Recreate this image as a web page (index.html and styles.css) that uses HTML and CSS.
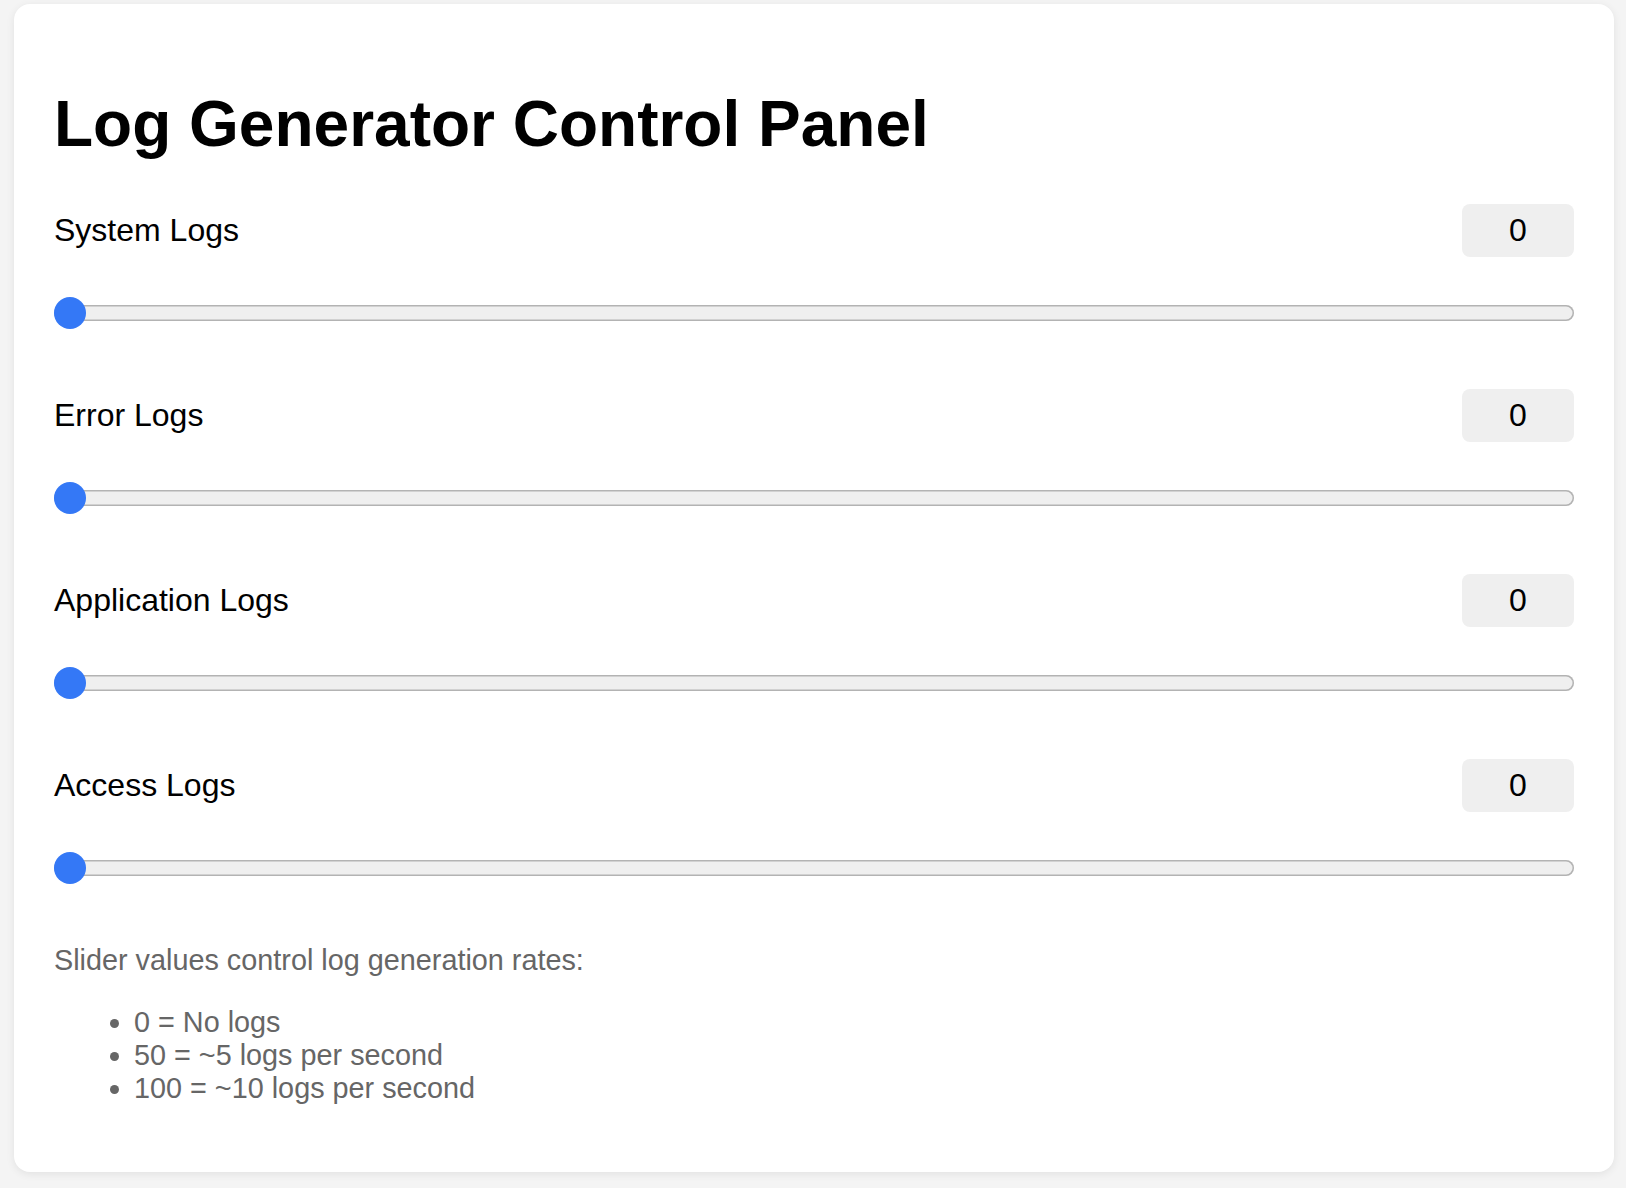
FILE: index.html
```html
<!DOCTYPE html>
<html lang="en">
<head>
<meta charset="utf-8">
<title>Log Generator Control Panel</title>
<link rel="stylesheet" href="styles.css">
</head>
<body>
<div class="card">
  <h1 class="title">Log Generator Control Panel</h1>

  <div class="group">
    <div class="row">
      <label class="label" for="system">System Logs</label>
      <span class="value">0</span>
    </div>
    <input class="slider" id="system" type="range" min="0" max="100" value="0">
  </div>

  <div class="group">
    <div class="row">
      <label class="label" for="error">Error Logs</label>
      <span class="value">0</span>
    </div>
    <input class="slider" id="error" type="range" min="0" max="100" value="0">
  </div>

  <div class="group">
    <div class="row">
      <label class="label" for="application">Application Logs</label>
      <span class="value">0</span>
    </div>
    <input class="slider" id="application" type="range" min="0" max="100" value="0">
  </div>

  <div class="group">
    <div class="row">
      <label class="label" for="access">Access Logs</label>
      <span class="value">0</span>
    </div>
    <input class="slider" id="access" type="range" min="0" max="100" value="0">
  </div>

  <p class="note">Slider values control log generation rates:</p>
  <ul class="note-list">
    <li>0 = No logs</li>
    <li>50 = ~5 logs per second</li>
    <li>100 = ~10 logs per second</li>
  </ul>
</div>
</body>
</html>
```

FILE: styles.css
```css
html, body {
  margin: 0;
  background: #f4f4f4;
}

body {
  padding: 4px 12px 15px 14px;
  font-family: "Liberation Sans", Arial, Helvetica, sans-serif;
  color: #000;
}

.card {
  width: 1600px;
  box-sizing: border-box;
  background: #fff;
  border-radius: 16px;
  padding: 40px;
  box-shadow: 0 2px 8px rgba(0, 0, 0, 0.08);
}

.title {
  font-size: 64px;
  font-weight: bold;
  line-height: 74px;
  margin: 43px 0 43px;
}

.group + .group {
  margin-top: 60px;
}

.row {
  display: flex;
  justify-content: space-between;
  align-items: center;
  height: 53px;
}

.label {
  font-size: 32px;
  line-height: 37px;
}

.value {
  width: 112px;
  height: 53px;
  box-sizing: border-box;
  background: #efefef;
  border-radius: 8px;
  font-size: 32px;
  line-height: 53px;
  text-align: center;
}

.slider {
  -webkit-appearance: none;
  appearance: none;
  display: block;
  width: 100%;
  height: 32px;
  margin: 40px 0 0;
  padding: 0;
  background: transparent;
}

.slider::-webkit-slider-runnable-track {
  height: 16px;
  background: #efefef;
  border-radius: 8px;
  box-shadow: inset 0 0 0 1.5px #b3b3b3;
}

.slider::-webkit-slider-thumb {
  -webkit-appearance: none;
  appearance: none;
  width: 32px;
  height: 32px;
  border-radius: 50%;
  background: #3478f6;
  margin-top: -8px;
  border: none;
}

.note {
  margin: 60px 0 28.8px;
  font-size: 28.8px;
  color: #666;
}

.note-list {
  margin: 0 0 26.8px;
  padding-left: 80px;
  font-size: 28.8px;
  color: #666;
}
```
